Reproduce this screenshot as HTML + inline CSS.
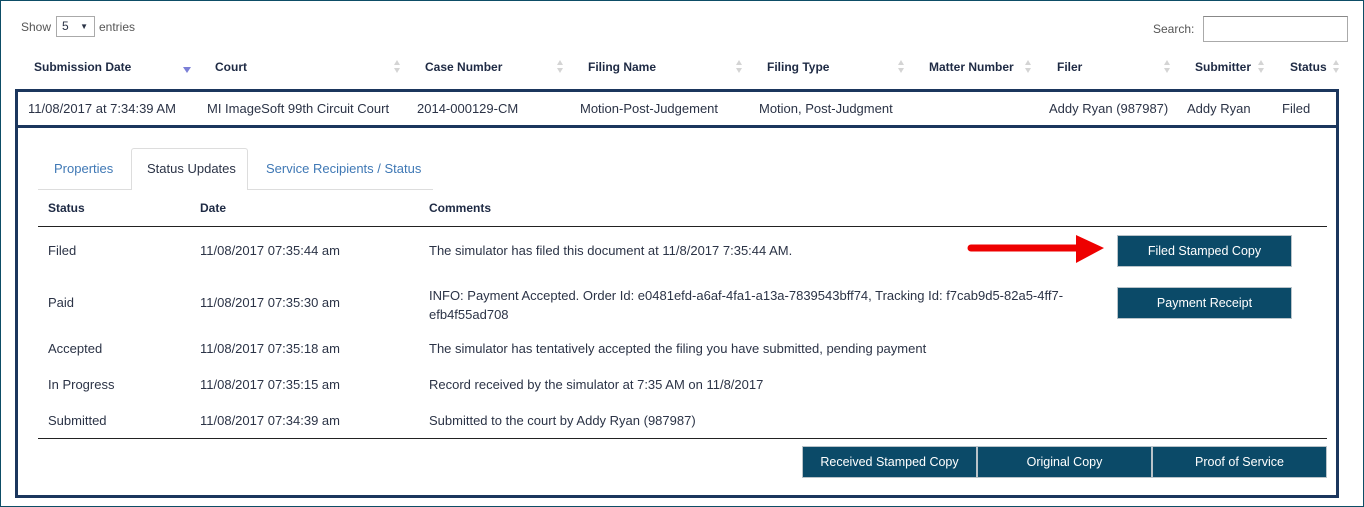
<!DOCTYPE html>
<html><head><meta charset="utf-8"><style>
*{margin:0;padding:0;box-sizing:border-box}
body{width:1364px;height:507px;background:#fff;font-family:"Liberation Sans",sans-serif;font-size:13px;color:#2b3346;position:relative;overflow:hidden}
.frame{position:absolute;left:0;top:0;width:1364px;height:507px;border:1px solid #0d4d66}
.t{position:absolute;line-height:16px;white-space:nowrap;margin-top:1px}
.b{font-weight:bold;color:#1e2a44;font-size:12px}
.blue{color:#3f78b5}
.box{position:absolute;left:15px;top:89px;width:1324px;height:409px;border:3px solid #1b365d}
.rowline{position:absolute;left:15px;top:125px;width:1324px;height:3px;background:#1b365d}
.btn{position:absolute;background:#0b4a68;color:#fff;border:1px solid #b9c3c9;text-align:center;font-size:12.5px;line-height:30px}
.sort{position:absolute;width:7px;height:14px}
.sort:before{content:"";position:absolute;left:0;top:0;border-left:3.5px solid transparent;border-right:3.5px solid transparent;border-bottom:5px solid #d4d4d4}
.sort:after{content:"";position:absolute;left:0;top:8px;border-left:3.5px solid transparent;border-right:3.5px solid transparent;border-top:5px solid #d4d4d4}
.hl{position:absolute;height:1px;background:#222;left:38px;width:1289px}
</style></head><body>
<div class="frame"></div>
<div class="t" style="left:21px;top:18px;color:#555;font-size:12px">Show</div>
<div style="position:absolute;left:56px;top:16px;width:39px;height:21px;border:1px solid #aaa;font-size:12px;line-height:19px;padding-left:5px">5<span style="position:absolute;right:6px;top:0;font-size:8px">▼</span></div>
<div class="t" style="left:99px;top:18px;color:#555;font-size:12px">entries</div>
<div class="t" style="left:1153px;top:20px;color:#555;font-size:12px">Search:</div>
<div style="position:absolute;left:1203px;top:16px;width:145px;height:26px;border:1px solid #aaa;border-top-color:#888"></div>

<div class="t b" style="left:34px;top:58px">Submission Date</div>
<div style="position:absolute;left:183px;top:67px;border-left:4px solid transparent;border-right:4px solid transparent;border-top:6px solid #7b7fd6"></div>
<div class="t b" style="left:215px;top:58px">Court</div><div class="sort" style="left:394px;top:60px"></div>
<div class="t b" style="left:425px;top:58px">Case Number</div><div class="sort" style="left:557px;top:60px"></div>
<div class="t b" style="left:588px;top:58px">Filing Name</div><div class="sort" style="left:736px;top:60px"></div>
<div class="t b" style="left:767px;top:58px">Filing Type</div><div class="sort" style="left:898px;top:60px"></div>
<div class="t b" style="left:929px;top:58px">Matter Number</div><div class="sort" style="left:1025px;top:60px"></div>
<div class="t b" style="left:1057px;top:58px">Filer</div><div class="sort" style="left:1164px;top:60px"></div>
<div class="t b" style="left:1195px;top:58px">Submitter</div><div class="sort" style="left:1258px;top:60px"></div>
<div class="t b" style="left:1290px;top:58px">Status</div><div class="sort" style="left:1333px;top:60px"></div>

<div class="box"></div>
<div class="rowline"></div>
<div class="t" style="left:28px;top:100px">11/08/2017 at 7:34:39 AM</div>
<div class="t" style="left:207px;top:100px">MI ImageSoft 99th Circuit Court</div>
<div class="t" style="left:417px;top:100px">2014-000129-CM</div>
<div class="t" style="left:580px;top:100px">Motion-Post-Judgement</div>
<div class="t" style="left:759px;top:100px">Motion, Post-Judgment</div>
<div class="t" style="left:1049px;top:100px">Addy Ryan (987987)</div>
<div class="t" style="left:1187px;top:100px">Addy Ryan</div>
<div class="t" style="left:1282px;top:100px">Filed</div>

<div style="position:absolute;left:38px;top:189px;width:395px;height:1px;background:#ddd"></div>
<div style="position:absolute;left:131px;top:148px;width:117px;height:42px;border:1px solid #ddd;border-bottom:none;border-radius:3px 3px 0 0;background:#fff"></div>
<div class="t blue" style="left:54px;top:160px">Properties</div>
<div class="t" style="left:147px;top:160px">Status Updates</div>
<div class="t blue" style="left:266px;top:160px">Service Recipients / Status</div>

<div class="t b" style="left:48px;top:199px">Status</div>
<div class="t b" style="left:200px;top:199px">Date</div>
<div class="t b" style="left:429px;top:199px">Comments</div>
<div class="hl" style="top:226px"></div>

<div class="t" style="left:48px;top:242px">Filed</div>
<div class="t" style="left:200px;top:242px">11/08/2017 07:35:44 am</div>
<div class="t" style="left:429px;top:242px">The simulator has filed this document at 11/8/2017 7:35:44 AM.</div>
<div class="t" style="left:48px;top:294px">Paid</div>
<div class="t" style="left:200px;top:294px">11/08/2017 07:35:30 am</div>
<div class="t" style="left:429px;top:285px;line-height:19px">INFO: Payment Accepted. Order Id: e0481efd-a6af-4fa1-a13a-7839543bff74, Tracking Id: f7cab9d5-82a5-4ff7-<br>efb4f55ad708</div>
<div class="t" style="left:48px;top:340px">Accepted</div>
<div class="t" style="left:200px;top:340px">11/08/2017 07:35:18 am</div>
<div class="t" style="left:429px;top:340px">The simulator has tentatively accepted the filing you have submitted, pending payment</div>
<div class="t" style="left:48px;top:376px">In Progress</div>
<div class="t" style="left:200px;top:376px">11/08/2017 07:35:15 am</div>
<div class="t" style="left:429px;top:376px">Record received by the simulator at 7:35 AM on 11/8/2017</div>
<div class="t" style="left:48px;top:412px">Submitted</div>
<div class="t" style="left:200px;top:412px">11/08/2017 07:34:39 am</div>
<div class="t" style="left:429px;top:412px">Submitted to the court by Addy Ryan (987987)</div>
<div class="hl" style="top:438px"></div>

<svg style="position:absolute;left:966px;top:233px" width="140" height="32"><line x1="5" y1="15" x2="115" y2="15" stroke="#e00" stroke-width="7" stroke-linecap="round"/><polygon points="110,2 138,15 110,30" fill="#e00"/></svg>

<div class="btn" style="left:1117px;top:235px;width:175px;height:32px">Filed Stamped Copy</div>
<div class="btn" style="left:1117px;top:287px;width:175px;height:32px">Payment Receipt</div>
<div class="btn" style="left:802px;top:446px;width:175px;height:32px">Received Stamped Copy</div>
<div class="btn" style="left:977px;top:446px;width:175px;height:32px">Original Copy</div>
<div class="btn" style="left:1152px;top:446px;width:175px;height:32px">Proof of Service</div>
</body></html>
